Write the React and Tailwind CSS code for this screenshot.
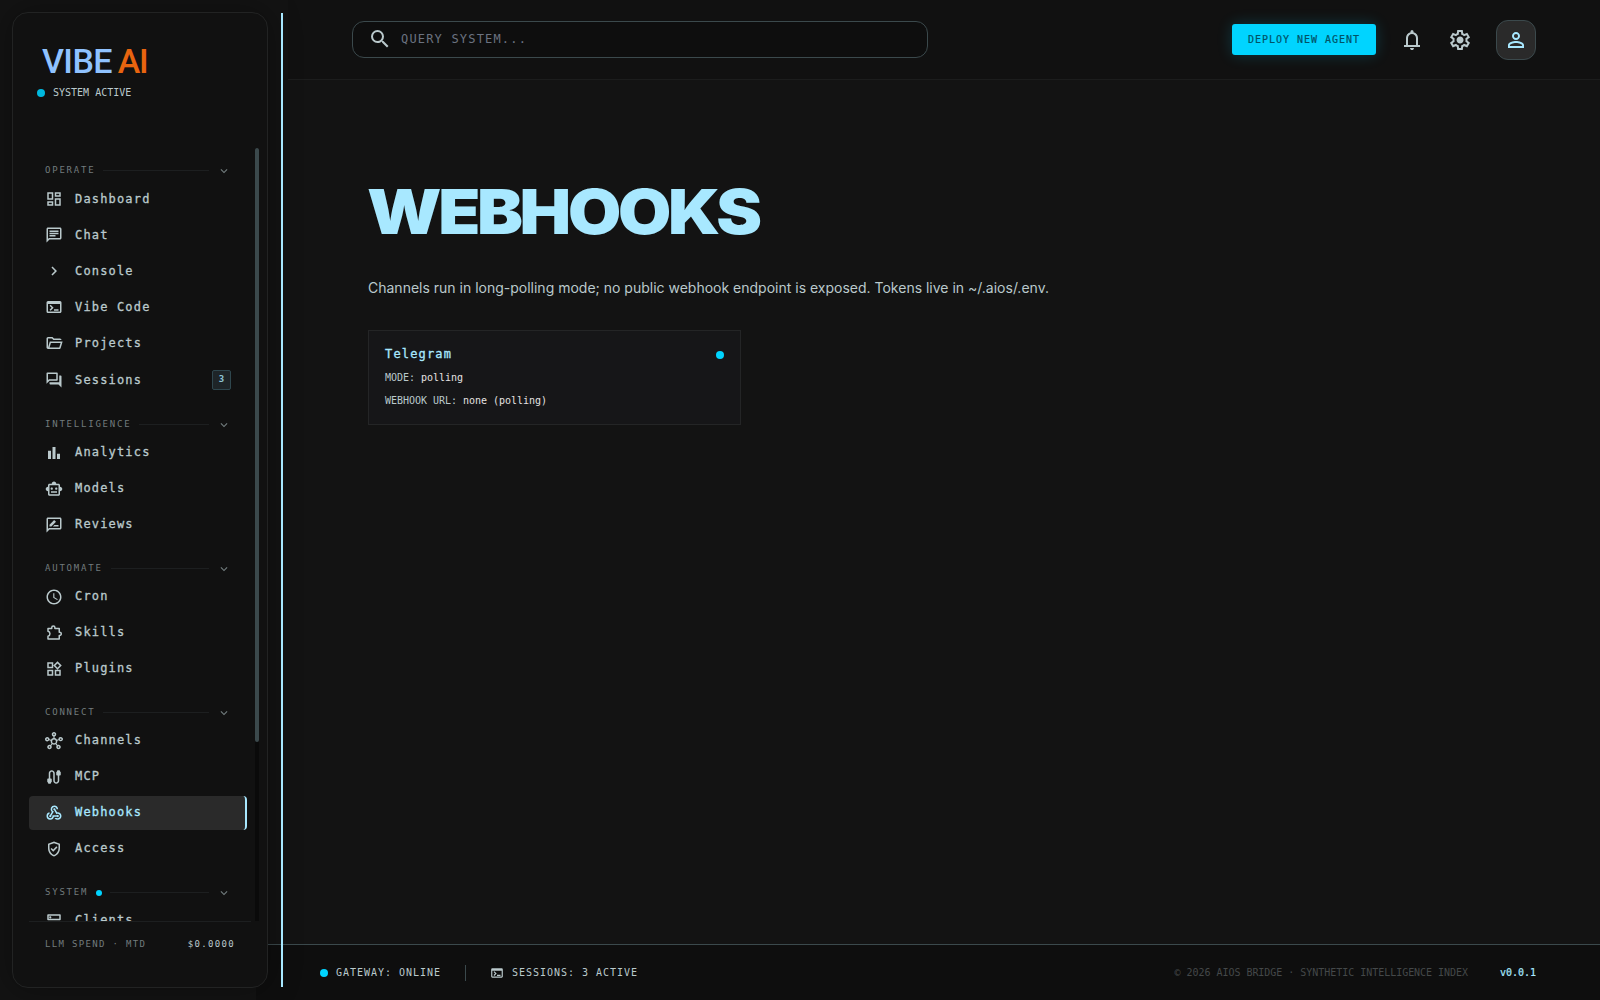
import React from 'react'
import {
  MdBarChart,
  MdCable,
  MdChevronRight,
  MdExpandMore,
  MdOutlineChat,
  MdOutlineDashboard,
  MdOutlineDns,
  MdOutlineForum,
  MdOutlineGppGood,
  MdOutlineHub,
  MdOutlineRateReview,
  MdOutlineSmartToy,
  MdOutlineTerminal,
  MdOutlineWidgets,
  MdPersonOutline,
  MdSchedule,
  MdSearch,
  MdWebhook,
} from 'react-icons/md'

const Symbol = ({ size, d, className }) => (
  <svg width={size} height={size} viewBox="0 -960 960 960" fill="currentColor" className={className}>
    <path d={d} />
  </svg>
)

const FolderIcon = (props) => (
  <Symbol
    {...props}
    d="M160-160q-33 0-56.5-23.5T80-240v-480q0-33 23.5-56.5T160-800h240l80 80h320q33 0 56.5 23.5T880-640H447l-80-80H160v480l96-320h684L837-217q-8 26-29.5 41.5T760-160H160Zm84-80h516l72-240H316l-72 240Z"
  />
)

const BellIcon = (props) => (
  <Symbol
    {...props}
    d="M160-200v-80h80v-280q0-83 50-147.5T420-792v-28q0-25 17.5-42.5T480-880t42.5 17.5T540-820v28q80 20 130 84.5T720-560v280h80v80H160Zm320 120q-33 0-56.5-23.5T400-160h160q0 33-23.5 56.5T480-80ZM320-280h320v-280q0-66-47-113t-113-47q-66 0-113 47t-47 113v280Z"
  />
)

const GearIcon = (props) => (
  <Symbol
    {...props}
    d="m370-80-16-128q-13-5-24.5-12T307-235l-119 50L78-375l103-78q-1-7-1-13.5v-27q0-6.5 1-13.5L78-585l110-190 119 50q11-8 23-15t24-12l16-128h220l16 128q13 5 24.5 12t22.5 15l119-50 110 190-103 78q1 7 1 13.5v27q0 6.5-2 13.5l103 78-110 190-118-50q-11 8-23 15t-24 12L590-80H370Zm70-80h79l14-106q31-8 57.5-23.5T639-327l99 41 39-68-86-65q5-14 7-29.5t2-31.5q0-16-2-31.5t-7-29.5l86-65-39-68-99 42q-22-23-48.5-38.5T533-694l-13-106h-79l-14 106q-31 8-57.5 23.5T321-633l-99-41-39 68 86 64q-5 15-7 30t-2 32q0 16 2 31t7 30l-86 65 39 68 99-42q22 23 48.5 38.5T427-266l13 106Zm42-180q58 0 99-41t41-99q0-58-41-99t-99-41q-59 0-99.5 41T342-480q0 58 40.5 99t99.5 41Z"
  />
)

const PuzzleIcon = ({ size, className }) => (
  <svg
    width={size}
    height={size}
    viewBox="0 0 24 24"
    fill="none"
    stroke="currentColor"
    strokeWidth="2"
    strokeLinejoin="round"
    className={className}
  >
    <path d="M4 20v-3.7a3.4 3.4 0 0 0 0-6.6V6h5V4.6a2.1 2.1 0 0 1 4.2 0V6H19v5h.6a2.1 2.1 0 0 1 0 4.2H19V20z" />
  </svg>
)

const groups = [
  {
    title: 'OPERATE',
    first: true,
    items: [
      { name: 'Dashboard', icon: MdOutlineDashboard },
      { name: 'Chat', icon: MdOutlineChat },
      { name: 'Console', icon: MdChevronRight },
      { name: 'Vibe Code', icon: MdOutlineTerminal },
      { name: 'Projects', icon: FolderIcon },
      { name: 'Sessions', icon: MdOutlineForum, badge: 3 },
    ],
  },
  {
    title: 'INTELLIGENCE',
    items: [
      { name: 'Analytics', icon: MdBarChart },
      { name: 'Models', icon: MdOutlineSmartToy },
      { name: 'Reviews', icon: MdOutlineRateReview },
    ],
  },
  {
    title: 'AUTOMATE',
    items: [
      { name: 'Cron', icon: MdSchedule },
      { name: 'Skills', icon: PuzzleIcon },
      { name: 'Plugins', icon: MdOutlineWidgets },
    ],
  },
  {
    title: 'CONNECT',
    items: [
      { name: 'Channels', icon: MdOutlineHub },
      { name: 'MCP', icon: MdCable },
      { name: 'Webhooks', icon: MdWebhook, active: true },
      { name: 'Access', icon: MdOutlineGppGood },
    ],
  },
  {
    title: 'SYSTEM',
    dot: true,
    items: [{ name: 'Clients', icon: MdOutlineDns }],
  },
]

const NavItem = ({ item, raised }) => {
  const Icon = item.icon

  return (
    <a
      className={`flex h-[34px] shrink-0 items-center gap-3 rounded px-4 ${item.badge ? 'mb-px' : ''} ${
        item.active ? 'border-r-2 border-[#a8e8ff] bg-[#2a2a2a] text-[#a8e8ff]' : 'text-[#bac9cc]'
      }`}
    >
      <Icon size={18} className={`shrink-0 ${raised ? '-mt-[2px]' : ''}`} />
      <span
        className={`text-[12px] leading-[18px] tracking-[1.17px] [-webkit-text-stroke:0.3px_currentColor] ${
          item.badge ? '-mt-px' : '-mt-[3px]'
        }`}
      >
        {item.name}
      </span>
      {item.badge && (
        <span className="ml-auto flex h-5 w-[19px] items-center justify-center rounded-xs border border-[#2f474e] bg-[#1e2528] pb-px text-[9px] leading-none font-bold text-[#8fc5d8]">
          {item.badge}
        </span>
      )}
    </a>
  )
}

const NavGroup = ({ group }) => (
  <div className="flex shrink-0 flex-col">
    <div className={`flex h-[23px] items-center gap-2 px-4 text-[#717b7d] ${group.first ? '-mt-px mb-px' : ''}`}>
      <span className="-mt-[2px] text-[9px] leading-[14px] tracking-[1.78px]">{group.title}</span>
      {group.dot && <span className="size-1.5 rounded-full bg-[#00d4ff]" />}
      <span className="h-px flex-1 bg-[#1d1f20]" />
      <MdExpandMore size={14} />
    </div>
    <div className="flex flex-col gap-[2px]">
      {group.items.map((item) => (
        <NavItem key={item.name} item={item} raised={group.first && !item.badge} />
      ))}
    </div>
  </div>
)

const Sidebar = () => (
  <aside className="relative z-10 flex w-72 shrink-0 gap-[13px] py-3 pl-3">
    <div className="flex w-64 flex-col rounded-2xl border border-[#222323] bg-[#111111] pl-4 shadow-[0_0_32px_rgba(0,0,0,0.35)]">
      <div className="h-[135px] shrink-0 pt-[31px]">
        <div className="flex h-[34px] items-center gap-[6px] pl-[13px] font-['Roboto'] text-[34px] leading-none font-medium">
          <span className="tracking-[-0.6px] text-[#8fc2ff]">VIBE</span>
          <span className="tracking-[-1.5px] text-[#e8640f]">AI</span>
        </div>
        <div className="mt-[7px] flex items-center gap-2 pl-2">
          <span className="size-2 rounded-full bg-[#00b9df]" />
          <span className="text-[10px] leading-[15px] text-[#bac9cc]">SYSTEM ACTIVE</span>
        </div>
      </div>
      <div className="flex h-[773px] shrink-0 gap-2 overflow-hidden">
        <nav className="flex w-[218px] flex-col gap-[15px] overflow-hidden pt-3">
          {groups.map((group) => (
            <NavGroup key={group.title} group={group} />
          ))}
        </nav>
        <div className="w-1 bg-[#0a0a0a]">
          <div className="h-[594px] rounded-full bg-[#3b494c]" />
        </div>
      </div>
      <div className="mr-4 flex items-center justify-between border-t border-[#1d1f20] px-4 pt-[15px] text-[9px] leading-[14px] tracking-[1.33px]">
        <span className="text-[#717b7d]">LLM SPEND · MTD</span>
        <span className="text-[#bac9cc]">$0.0000</span>
      </div>
    </div>
    <div className="my-px w-0.5 bg-[#a8e8ff]" />
  </aside>
)

const Header = () => (
  <header className="flex h-20 shrink-0 items-center justify-between border-b border-[#1c1d1d] bg-[#111111] px-16">
    <div className="flex h-[37px] w-xl items-center gap-[9px] rounded-xl border border-[#3b494c] bg-[#0e0e0e] pl-[15px]">
      <MdSearch size={24} className="-mt-px text-[#bac9cc]" />
      <span className="-mt-px text-[12px] tracking-[1.18px] text-[#6b7280]">QUERY SYSTEM...</span>
    </div>
    <div className="flex items-center gap-6 text-[#bac9cc]">
      <button className="h-[31px] w-36 rounded-[3px] bg-[#00d4ff] text-center text-[10px] leading-[15px] tracking-[0.98px] text-[#005266] shadow-[0_0_15px_rgba(0,212,255,0.2)] [-webkit-text-stroke:0.2px_currentColor]">
        DEPLOY NEW AGENT
      </button>
      <BellIcon size={24} />
      <GearIcon size={24} />
      <div className="flex size-10 items-center justify-center rounded-xl border border-[#3b494c] bg-[#2a2a2a] text-[#a8e8ff]">
        <MdPersonOutline size={24} />
      </div>
    </div>
  </header>
)

const WebhookCard = ({ name, mode, url }) => (
  <div className="flex flex-col gap-2 border border-[#242526] bg-[#161618] p-4 text-[10px] leading-[15px]">
    <div className="flex items-center justify-between">
      <h3 className="text-[12px] leading-[15px] tracking-[1.17px] text-[#a8e8ff] [-webkit-text-stroke:0.3px_currentColor]">
        {name}
      </h3>
      <span className="mt-px size-2 rounded-full bg-[#00d4ff]" />
    </div>
    <p className="tracking-[-0.02px] text-[#bac9cc]">
      MODE: <span className="text-[#e5e2e1]">{mode}</span>
    </p>
    <p className="tracking-[-0.02px] text-[#bac9cc]">
      WEBHOOK URL: <span className="text-[#e5e2e1]">{url}</span>
    </p>
  </div>
)

const Footer = () => (
  <footer className="-ml-8 flex h-14 shrink-0 items-center justify-between border-t border-[#3b494c] bg-[#0e0e0e] px-16 text-[10px] leading-[15px]">
    <div className="flex items-center gap-6 tracking-[0.98px] text-[#bac9cc]">
      <div className="flex items-center gap-2">
        <span className="size-2 rounded-full bg-[#00d4ff]" />
        <span>GATEWAY: ONLINE</span>
      </div>
      <span className="h-4 w-px bg-[#3b494c]" />
      <div className="flex items-center gap-2">
        <MdOutlineTerminal size={14} className="mt-px" />
        <span>SESSIONS: 3 ACTIVE</span>
      </div>
    </div>
    <div className="flex items-center gap-8 tracking-[-0.03px]">
      <span className="text-[#444849]">© 2026 AIOS BRIDGE · SYNTHETIC INTELLIGENCE INDEX</span>
      <span className="text-[#a8e8ff] [-webkit-text-stroke:0.2px_currentColor]">v0.0.1</span>
    </div>
  </footer>
)

const App = () => {
  return (
    <div className="flex h-screen overflow-hidden bg-[#131313] font-['DejaVu_Sans_Mono',monospace]">
      <Sidebar />
      <div className="flex min-w-0 flex-1 flex-col">
        <Header />
        <main className="flex-1 px-20 pt-24">
          <h1 className="-ml-px h-[72px] w-fit origin-left scale-x-[1.11] font-['Inter',sans-serif] text-[62px] leading-[72px] font-black tracking-[-3px] whitespace-nowrap text-[#a8e8ff]">
            WEBHOOKS
          </h1>
          <p className="mt-[28px] font-['Inter',sans-serif] text-[14px] leading-6 text-[#bac9cc]">
            Channels run in long-polling mode; no public webhook endpoint is exposed. Tokens live in ~/.aios/.env.
          </p>
          <div className="mt-[30px] -mr-4 grid grid-cols-3 gap-6">
            <WebhookCard name="Telegram" mode="polling" url="none (polling)" />
          </div>
        </main>
        <Footer />
      </div>
    </div>
  )
}

export default App
